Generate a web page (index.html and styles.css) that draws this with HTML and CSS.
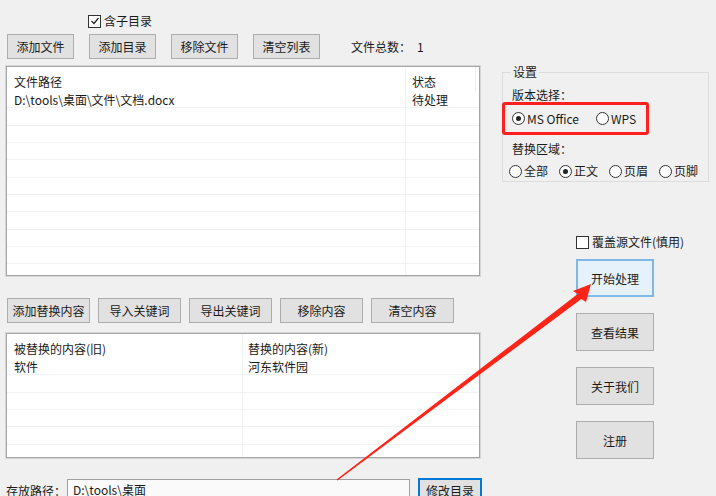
FILE: index.html
```html
<!DOCTYPE html>
<html lang="zh-CN">
<head>
  <meta charset="UTF-8">
  <title>批量替换</title>
  <link rel="stylesheet" href="styles.css">
</head>
<body>

  <div class="app">
    <!-- left side: files + keywords -->
    <div class="left">
      <label class="check subdir"><span class="box on"><svg viewBox="0 0 10 10" width="10" height="10"><path d="M1.5 5 L4 7.5 L8.5 2" fill="none" stroke="#222" stroke-width="1.2"/></svg></span>含子目录</label>

      <div class="toolbar">
        <button class="btn w67">添加文件</button>
        <button class="btn w67">添加目录</button>
        <button class="btn w67">移除文件</button>
        <button class="btn w67">清空列表</button>
        <span class="count">文件总数：<span class="num">1</span></span>
      </div>

      <div class="list files">
        <div class="row head">
          <div class="cell c1">文件路径</div>
          <div class="cell c2 hd">状态</div>
        </div>
        <div class="row"><div class="cell c1">D:\tools\桌面\文件\文档.docx</div><div class="cell c2">待处理</div></div>
        <div class="row"><div class="cell c1"></div><div class="cell c2"></div></div>
        <div class="row"><div class="cell c1"></div><div class="cell c2"></div></div>
        <div class="row"><div class="cell c1"></div><div class="cell c2"></div></div>
        <div class="row"><div class="cell c1"></div><div class="cell c2"></div></div>
        <div class="row"><div class="cell c1"></div><div class="cell c2"></div></div>
        <div class="row"><div class="cell c1"></div><div class="cell c2"></div></div>
        <div class="row"><div class="cell c1"></div><div class="cell c2"></div></div>
        <div class="row"><div class="cell c1"></div><div class="cell c2"></div></div>
        <div class="row"><div class="cell c1"></div><div class="cell c2"></div></div>
        <div class="row"><div class="cell c1"></div><div class="cell c2"></div></div>
      </div>

      <div class="toolbar tb2">
        <button class="btn w83">添加替换内容</button>
        <button class="btn w83">导入关键词</button>
        <button class="btn w83">导出关键词</button>
        <button class="btn w83">移除内容</button>
        <button class="btn w83">清空内容</button>
      </div>

      <div class="list words">
        <div class="row head">
          <div class="cell k1">被替换的内容(旧)</div>
          <div class="cell k2">替换的内容(新)</div>
        </div>
        <div class="row"><div class="cell k1">软件</div><div class="cell k2">河东软件园</div></div>
        <div class="row"><div class="cell k1"></div><div class="cell k2"></div></div>
        <div class="row"><div class="cell k1"></div><div class="cell k2"></div></div>
        <div class="row"><div class="cell k1"></div><div class="cell k2"></div></div>
        <div class="row"><div class="cell k1"></div><div class="cell k2"></div></div>
        <div class="row"><div class="cell k1"></div><div class="cell k2"></div></div>
      </div>

      <div class="pathrow">
        <span class="plabel">存放路径：</span>
        <div class="pinput">D:\tools\桌面</div>
        <button class="btn blue small">修改目录</button>
      </div>
    </div>

    <!-- right side: settings + actions -->
    <div class="right">
      <fieldset class="group">
        <legend>设置</legend>
        <div class="glabel first">版本选择：</div>
        <div class="radios mark">
          <label class="radio ms"><span class="dot on"></span>MS Office</label>
          <label class="radio"><span class="dot"></span>WPS</label>
        </div>
        <div class="glabel">替换区域：</div>
        <div class="radios area">
          <label class="radio"><span class="dot"></span>全部</label>
          <label class="radio"><span class="dot on"></span>正文</label>
          <label class="radio"><span class="dot"></span>页眉</label>
          <label class="radio"><span class="dot"></span>页脚</label>
        </div>
      </fieldset>

      <div class="actions">
        <label class="check"><span class="box"></span>覆盖源文件(慎用)</label>
        <button class="btn big blue-soft">开始处理</button>
        <button class="btn big">查看结果</button>
        <button class="btn big">关于我们</button>
        <button class="btn big">注册</button>
      </div>
    </div>
  </div>

  <!-- red annotation arrow drawn over the window -->
  <svg class="arrow" width="716" height="496" viewBox="0 0 716 496">
    <polygon points="336.5,479.4 577.7,294.1 573,291 591,284 586,302 581.3,298.9 337.5,480.6" fill="#ff2418"/>
  </svg>

</body>
</html>
```

FILE: styles.css
```css
body {
  margin: 0;
  background-color: #f0f0f0;
  font-family: "Noto Sans CJK SC", "Noto Sans", sans-serif;
  font-size: 12px;
  color: #1a1a1a;
  width: 716px;
  height: 496px;
  overflow: hidden;
  position: relative;
}
.app { display: flex; padding-left: 6px; }
.left { width: 478px; }
.right { width: 207px; margin-left: 18px; padding-top: 64px; }

.btn {
  font-family: inherit; font-size: 12px; color: #1a1a1a;
  background-color: #e1e1e1; border: 1px solid #adadad;
  height: 25px; padding: 0; margin: 0; box-sizing: border-box;
}
.w67 { width: 67px; }
.w83 { width: 83px; }
.blue { border: 2px solid #0078d7; background-color: #e1e1e1; }
.blue-soft { border: 2px solid #7db8e8; background-color: #e5f1fb; }

/* checkboxes */
.check { display: flex; align-items: center; height: 14px; line-height: 14px; white-space: nowrap; }
.check .box {
  width: 11px; height: 11px; border: 1px solid #333; background: #fff;
  margin-right: 3px; display: flex; align-items: center; justify-content: center;
}
.subdir { margin-left: 82px; padding-top: 14px; }

.toolbar { display: flex; align-items: center; gap: 15px; margin-top: 6px; padding-left: 1px; }
.count { margin-left: 16px; }
.count .num { margin-left: 6px; }
.tb2 { gap: 8px; margin-top: 22px; }

/* list views */
.list {
  background: #fff; border: 1px solid #a6a6a6; box-shadow: 0 0 0 1px #d6d6d6;
  width: 472px; overflow: hidden; margin-left: 0;
}
.files { height: 208px; margin-top: 7px; }
.words { height: 123px; margin-top: 10px; }
.row { display: flex; height: 17.35px; box-sizing: border-box; border-bottom: 1px solid #f2f2f2; }
.row.head { height: 24px; border-bottom: none; }
.cell { box-sizing: border-box; white-space: nowrap; line-height: 17px; }
.head .cell { padding-top: 6px; line-height: 18px; }
.c1 { width: 399px; padding-left: 7px; border-right: 1px solid #f2f2f2; }
.c2 { width: 70px; padding-left: 6px; }
.c2.hd { border-right: 1px solid #ececec; }
.k1 { width: 236px; padding-left: 7px; border-right: 1px solid #f2f2f2; }
.k2 { flex: 1; padding-left: 5px; }

.pathrow { display: flex; align-items: flex-start; margin-top: 20px; }
.plabel { line-height: 22px; margin-top: 2px; }
.pinput {
  width: 343px; height: 22px; margin-left: 1px; margin-top: 1px; box-sizing: border-box;
  background: #fafafa; border: 1px solid #a0a0a0; padding-left: 5px; line-height: 20px;
}
.small { width: 64px; margin-left: 8px; }

/* settings group */
.group {
  margin: 0; padding: 0 0 2px 8px; border: 1px solid #dcdcdc;
  width: 207px; box-sizing: border-box;
}
.group legend { padding: 0 2px; line-height: 16px; }
.glabel { line-height: 15px; margin-top: 6px; padding-left: 1px; }
.glabel.first { margin-top: 7px; }
.radios { display: flex; align-items: center; }
.radio { display: flex; align-items: center; line-height: 16px; white-space: nowrap; flex-shrink: 0; }
.dot {
  width: 11px; height: 11px; border: 1px solid #333; border-radius: 50%;
  background: #fff; margin-right: 2px; position: relative; flex-shrink: 0;
}
.dot.on::after {
  content: ""; position: absolute; left: 3px; top: 3px;
  width: 5px; height: 5px; border-radius: 50%; background: #222;
}
.mark {
  margin-left: -9px; width: 147px; height: 33px; box-sizing: border-box;
  border: 3px solid #ff2020; border-radius: 3px; padding-left: 7px;
}
.ms { width: 84px; }
.area { margin-left: -2px; margin-top: 7px; gap: 11px; }

.actions { display: flex; flex-direction: column; align-items: flex-start; padding-left: 74px; margin-top: 53px; }
.big { width: 78px; height: 38px; margin-top: 16px; }
.actions .check + .big { margin-top: 10px; }

.arrow { position: absolute; left: 0; top: 0; pointer-events: none; }
```
